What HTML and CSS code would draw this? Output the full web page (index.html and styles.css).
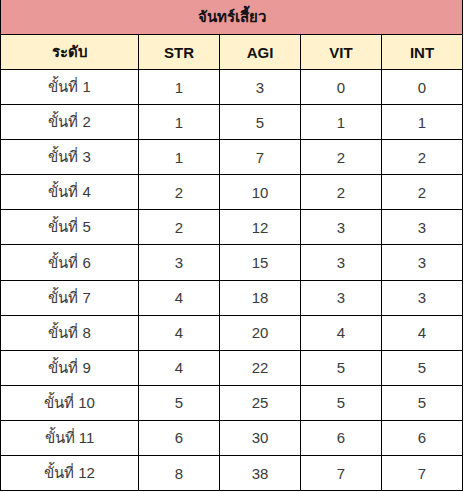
FILE: index.html
```html
<!DOCTYPE html>
<html lang="th">
<head>
<meta charset="utf-8">
<link rel="stylesheet" href="styles.css">
</head>
<body>
<table class="stats">
  <colgroup>
    <col class="c-level">
    <col class="c-stat">
    <col class="c-stat">
    <col class="c-stat">
    <col class="c-stat">
  </colgroup>
  <thead>
    <tr class="title-row"><th colspan="5">จันทร์เสี้ยว</th></tr>
    <tr class="head-row"><th>ระดับ</th><th>STR</th><th>AGI</th><th>VIT</th><th>INT</th></tr>
  </thead>
  <tbody>
    <tr><td>ขั้นที่ 1</td><td>1</td><td>3</td><td>0</td><td>0</td></tr>
    <tr><td>ขั้นที่ 2</td><td>1</td><td>5</td><td>1</td><td>1</td></tr>
    <tr><td>ขั้นที่ 3</td><td>1</td><td>7</td><td>2</td><td>2</td></tr>
    <tr><td>ขั้นที่ 4</td><td>2</td><td>10</td><td>2</td><td>2</td></tr>
    <tr><td>ขั้นที่ 5</td><td>2</td><td>12</td><td>3</td><td>3</td></tr>
    <tr><td>ขั้นที่ 6</td><td>3</td><td>15</td><td>3</td><td>3</td></tr>
    <tr><td>ขั้นที่ 7</td><td>4</td><td>18</td><td>3</td><td>3</td></tr>
    <tr><td>ขั้นที่ 8</td><td>4</td><td>20</td><td>4</td><td>4</td></tr>
    <tr><td>ขั้นที่ 9</td><td>4</td><td>22</td><td>5</td><td>5</td></tr>
    <tr><td>ขั้นที่ 10</td><td>5</td><td>25</td><td>5</td><td>5</td></tr>
    <tr><td>ขั้นที่ 11</td><td>6</td><td>30</td><td>6</td><td>6</td></tr>
    <tr><td>ขั้นที่ 12</td><td>8</td><td>38</td><td>7</td><td>7</td></tr>
  </tbody>
</table>
</body>
</html>
```
FILE: styles.css
```css
html, body {
  margin: 0;
  padding: 0;
  background: #ffffff;
}

.stats {
  border-collapse: collapse;
  table-layout: fixed;
  width: 463px;
  font-family: "Liberation Sans", Arial, sans-serif;
  font-size: 15px;
  color: #3a3a3a;
}

.c-level { width: 138px; }
.c-stat { width: 81px; }

.stats th,
.stats td {
  border: 1px solid #000000;
  height: 34px;
  padding: 0;
  text-align: center;
  vertical-align: middle;
}

.stats td {
  height: 34.1px;
}

.title-row th {
  background: #ea9999;
  border-top: none;
  color: #111111;
  font-weight: bold;
}

.head-row th {
  background: #fff2cc;
  color: #111111;
  font-weight: bold;
}
```
